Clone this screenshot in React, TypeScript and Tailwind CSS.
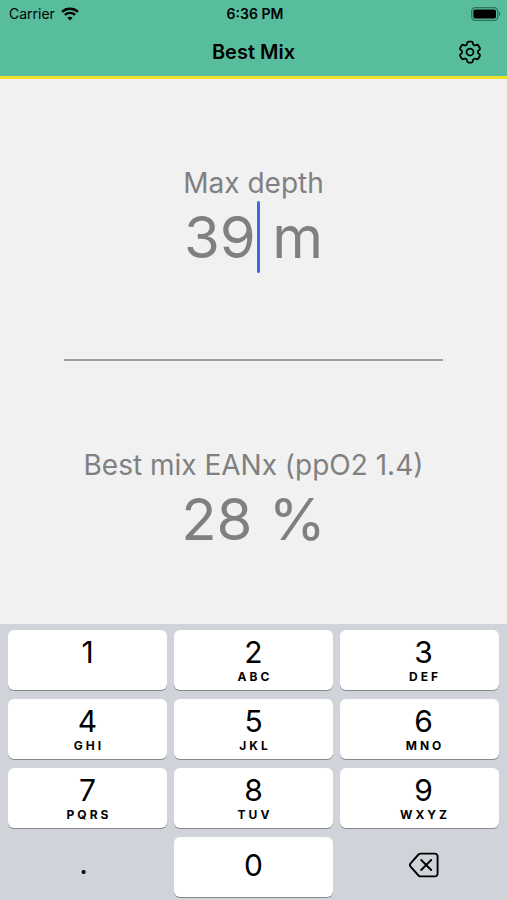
import { useState } from 'react';
import { HiOutlineCog6Tooth } from 'react-icons/hi2';

const KEYS = [
  { digit: '1', letters: '' },
  { digit: '2', letters: 'ABC' },
  { digit: '3', letters: 'DEF' },
  { digit: '4', letters: 'GHI' },
  { digit: '5', letters: 'JKL' },
  { digit: '6', letters: 'MNO' },
  { digit: '7', letters: 'PQRS' },
  { digit: '8', letters: 'TUV' },
  { digit: '9', letters: 'WXYZ' },
];

const PPO2 = 1.4;

// Best nitrox percentage for a depth in metres
function bestMix(depth: number) {
  return Math.min(100, Math.floor((PPO2 / (depth / 10 + 1)) * 100));
}

function WifiIcon() {
  return (
    <svg width="18" height="14" viewBox="0 0 18 14" fill="none" stroke="currentColor" aria-hidden="true">
      <path d="M1 4.9C5.5.7 12.5.7 17 4.9" strokeWidth="2.5" />
      <path d="M3.9 7.9c2.9-2.7 7.3-2.7 10.2 0" strokeWidth="2.3" />
      <path d="M9 13.4 6.4 10.7c1.5-1.3 3.7-1.3 5.2 0z" fill="currentColor" stroke="none" />
    </svg>
  );
}

function BatteryIcon() {
  return (
    <svg width="30" height="14" viewBox="0 0 30 14" fill="none" aria-hidden="true">
      <rect x=".7" y=".7" width="26" height="12.6" rx="3.6" stroke="#000" strokeOpacity=".4" strokeWidth="1.3" />
      <rect x="2.4" y="2.4" width="22.6" height="9.2" rx="1.8" fill="#000" />
      <path d="M28 4.8c1.6.5 1.6 3.9 0 4.4z" fill="#000" fillOpacity=".45" />
    </svg>
  );
}

function BackspaceIcon() {
  return (
    <svg width="30" height="26" viewBox="0 0 30 26" fill="none" stroke="currentColor" strokeWidth="1.9" strokeLinecap="round" strokeLinejoin="round" aria-hidden="true">
      <path d="M11.6 1.6h14.2a2.8 2.8 0 0 1 2.8 2.8v17.2a2.8 2.8 0 0 1-2.8 2.8H11.6a3 3 0 0 1-2.1-.9L1.8 14.9a2.7 2.7 0 0 1 0-3.8l7.7-8.6a3 3 0 0 1 2.1-.9z" />
      <path d="m12.2 8 10 10M22.2 8l-10 10" />
    </svg>
  );
}

export default function App() {
  const [depth, setDepth] = useState('39');

  const press = (char: string) => setDepth((prev) => prev + char);

  return (
    <div className="flex min-h-screen flex-col bg-[#f1f1f1] font-['Inter','Liberation_Sans',sans-serif]">
      <header className="border-b-3 border-[#f0e02c] bg-[#57bd9c] text-black">
        <div className="grid h-7 grid-cols-3 items-center pr-1.5 pl-[9px] text-sm">
          <div className="flex items-center gap-1.5">
            <span>Carrier</span>
            <WifiIcon />
          </div>
          <span className="text-center font-semibold">6:36 PM</span>
          <div className="flex justify-end">
            <BatteryIcon />
          </div>
        </div>
        <div className="grid h-12 grid-cols-[1fr_auto_1fr] items-center px-[23px]">
          <h1 className="col-start-2 text-xl font-semibold">Best Mix</h1>
          <button type="button" aria-label="Settings" className="justify-self-end">
            <HiOutlineCog6Tooth className="size-7" />
          </button>
        </div>
      </header>

      <main className="flex-1 text-center text-[#808080]">
        <section className="py-[86px]">
          <label htmlFor="depth" className="block text-[28px] leading-9">
            Max depth
          </label>
          <div className="flex h-18 items-center justify-center text-[58px]">
            <div className="relative flex">
              <input
                id="depth"
                inputMode="decimal"
                value={depth}
                onChange={(e) => setDepth(e.target.value)}
                className="field-sizing-content h-18 caret-transparent outline-none"
              />
              <span className="absolute top-0 -right-1 h-18 w-[3px] rounded-full bg-[#4169e1]" />
            </div>
            <span className="whitespace-pre"> m</span>
          </div>
        </section>

        <hr className="mx-16 border-t-2 border-[#a0a0a0]" />

        <section className="pt-[86px]">
          <h2 className="text-[28px] leading-9">Best mix EANx (ppO2 {PPO2})</h2>
          <p className="text-[58px] leading-[72px]">{bestMix(Number(depth) || 0)} %</p>
        </section>
      </main>

      <div className="grid grid-cols-3 gap-x-[7px] gap-y-[9px] bg-[#d0d3da] px-2 pt-[6px] pb-[3px] text-black">
        {KEYS.map((key) => (
          <button
            key={key.digit}
            type="button"
            onClick={() => press(key.digit)}
            className="flex h-[60px] flex-col items-center rounded-md bg-white pt-1 shadow-[0_1px_0_#898a8d] nth-[3n]:pl-2"
          >
            <span className="text-3xl leading-9">{key.digit}</span>
            <span className="pl-[3px] text-xs leading-[14px] font-bold tracking-[3px]">{key.letters}</span>
          </button>
        ))}
        <button type="button" onClick={() => press('.')} className="h-[60px] pr-2 pb-2 text-3xl">
          .
        </button>
        <button
          type="button"
          onClick={() => press('0')}
          className="h-[60px] rounded-md bg-white pb-1 text-3xl shadow-[0_1px_0_#898a8d]"
        >
          0
        </button>
        <button
          type="button"
          aria-label="Delete"
          onClick={() => setDepth((prev) => prev.slice(0, -1))}
          className="flex h-[60px] items-center justify-center pb-1 pl-2"
        >
          <BackspaceIcon />
        </button>
      </div>
    </div>
  );
}
